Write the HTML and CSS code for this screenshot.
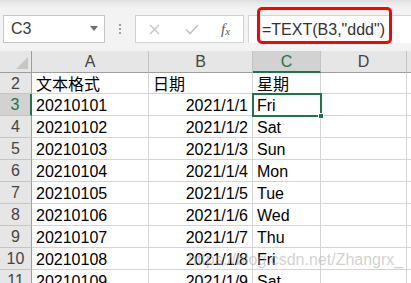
FILE: index.html
```html
<!DOCTYPE html>
<html>
<head>
<meta charset="utf-8">
<link rel="stylesheet" href="styles.css">
</head>
<body>
<div class="app">
  <div class="toolbar">
    <div class="namebox">
      <span class="name">C3</span>
      <svg class="caret" width="8" height="5" viewBox="0 0 8 5"><path d="M0 0H8L4 5Z" fill="#707070"/></svg>
    </div>
    <div class="grip"><i></i><i></i><i></i></div>
    <div class="buttons">
      <svg width="11" height="11" viewBox="0 0 11 11"><path d="M1 1L10 10M10 1L1 10" stroke="#c4c4c4" stroke-width="1.4" fill="none"/></svg>
      <svg width="14" height="11" viewBox="0 0 14 11"><path d="M1 5.5L5 9.5L13 1" stroke="#c4c4c4" stroke-width="1.6" fill="none"/></svg>
      <span class="fx">f<sub>x</sub></span>
    </div>
    <div class="formula">=TEXT(B3,"ddd")</div>
    <div class="highlight"></div>
  </div>
  <div class="sheet">
    <div class="hd corner"><svg width="12" height="12" viewBox="0 0 12 12"><path d="M12 0V12H0Z" fill="#c6c6c6"/></svg></div>
    <div class="hd col">A</div>
    <div class="hd col">B</div>
    <div class="hd col sel">C</div>
    <div class="hd col">D</div>
    <div class="hd col last"></div>

    <div class="hd row short">2</div><div class="c short">文本格式</div><div class="c short">日期</div><div class="c short">星期</div><div class="c short"></div><div class="c short last"></div>
    <div class="hd row rsel">3</div><div class="c">20210101</div><div class="c r">2021/1/1</div><div class="c active">Fri<span class="handle"></span></div><div class="c"></div><div class="c last"></div>
    <div class="hd row">4</div><div class="c">20210102</div><div class="c r">2021/1/2</div><div class="c">Sat</div><div class="c"></div><div class="c last"></div>
    <div class="hd row">5</div><div class="c">20210103</div><div class="c r">2021/1/3</div><div class="c">Sun</div><div class="c"></div><div class="c last"></div>
    <div class="hd row">6</div><div class="c">20210104</div><div class="c r">2021/1/4</div><div class="c">Mon</div><div class="c"></div><div class="c last"></div>
    <div class="hd row">7</div><div class="c">20210105</div><div class="c r">2021/1/5</div><div class="c">Tue</div><div class="c"></div><div class="c last"></div>
    <div class="hd row">8</div><div class="c">20210106</div><div class="c r">2021/1/6</div><div class="c">Wed</div><div class="c"></div><div class="c last"></div>
    <div class="hd row">9</div><div class="c">20210107</div><div class="c r">2021/1/7</div><div class="c">Thu</div><div class="c"></div><div class="c last"></div>
    <div class="hd row">10</div><div class="c">20210108</div><div class="c r">2021/1/8</div><div class="c">Fri</div><div class="c"></div><div class="c last"></div>
    <div class="hd row">11</div><div class="c">20210109</div><div class="c r">2021/1/9</div><div class="c">Sat</div><div class="c"></div><div class="c last"></div>
  </div>
  <div class="watermark">https://blog.csdn.net/Zhangrx_</div>
</div>
</body>
</html>
```
FILE: styles.css
```css
* { box-sizing: border-box; }
html, body { margin: 0; padding: 0; }
body {
  width: 411px;
  height: 283px;
  overflow: hidden;
  background: #ffffff;
  font-family: "Liberation Sans", "Noto Sans CJK SC", sans-serif;
  color: #000;
}
.app { position: relative; width: 411px; height: 283px; overflow: hidden; }

.toolbar {
  position: relative;
  height: 51px;
  background: linear-gradient(#dedede 0px, #ebebeb 4px, #f3f3f3 8px, #f3f3f3 100%);
  display: flex;
  align-items: flex-start;
  padding: 15px 0 0 3px;
}
.namebox {
  width: 102px;
  height: 28px;
  background: #fff;
  border: 1px solid #c6c6c6;
  display: flex;
  align-items: center;
  justify-content: space-between;
  padding: 0 6px 0 7px;
}
.name { font-size: 16px; color: #3a3a3a; }
.caret { margin-top: -2px; }
.grip {
  width: 30px;
  height: 28px;
  display: flex;
  flex-direction: column;
  align-items: center;
  justify-content: center;
  gap: 2px;
}
.grip i { display: block; width: 2px; height: 2px; background: #a0a0a0; }
.buttons {
  width: 109px;
  height: 28px;
  background: #fff;
  border: 1px solid #d0d0d0;
  display: flex;
  align-items: center;
  padding: 0 0 0 13px;
  gap: 25px;
}
.fx {
  font-family: "Liberation Serif", serif;
  font-style: italic;
  font-size: 15px;
  color: #5a5a5a;
  margin-left: -3px;
}
.fx sub { font-size: 11px; vertical-align: -1px; }
.formula {
  margin-left: 4px;
  flex: 1;
  height: 28px;
  background: #fff;
  border-top: 1px solid #d4d4d4;
  border-left: 1px solid #d4d4d4;
  font-size: 16px;
  line-height: 27px;
  color: #333;
  padding-left: 13px;
  white-space: nowrap;
}
.highlight {
  position: absolute;
  left: 257px;
  top: 7px;
  width: 135px;
  height: 37px;
  border: 3px solid #ff0000;
  border-radius: 5px;
}

.sheet {
  display: grid;
  grid-template-columns: 32px 117px 104px 68px 86px 4px;
  grid-template-rows: 22px 21px repeat(9, 22px);
  font-size: 16px;
}
.hd {
  background: #e6e6e6;
  color: #444;
  border-right: 1px solid #c4c4c4;
  border-bottom: 1px solid #c4c4c4;
  display: flex;
  align-items: center;
  justify-content: center;
}
.corner { justify-content: flex-end; align-items: flex-end; padding: 0 3px 3px 0; border-bottom-color: #9e9e9e; border-right-color: #9e9e9e; }
.col { border-bottom-color: #9e9e9e; padding-top: 1px; }
.col.last { border-right: none; }
.col.sel { background: #d2d2d2; color: #217346; border-bottom: 2px solid #217346; }
.row { border-right-color: #9e9e9e; padding-top: 1px; }
.rsel { background: #d2d2d2; color: #217346; border-right: 2px solid #217346; }
.c {
  border-right: 1px solid #d4d4d4;
  border-bottom: 1px solid #d4d4d4;
  padding: 2px 4px 0 4px;
  white-space: nowrap;
  overflow: hidden;
  line-height: 19px;
}
.c.last { border-right: none; }
.c.r { text-align: right; }
.c.active {
  position: relative;
  overflow: visible;
  outline: 2px solid #217346;
  outline-offset: -1px;
  z-index: 2;
}
.handle {
  position: absolute;
  right: -4px;
  bottom: -4px;
  width: 6px;
  height: 6px;
  background: #217346;
  border: 1px solid #fff;
}
.watermark {
  position: absolute;
  left: 188px;
  top: 251px;
  font-size: 16px;
  color: rgba(170, 170, 170, 0.55);
  white-space: nowrap;
}
```
